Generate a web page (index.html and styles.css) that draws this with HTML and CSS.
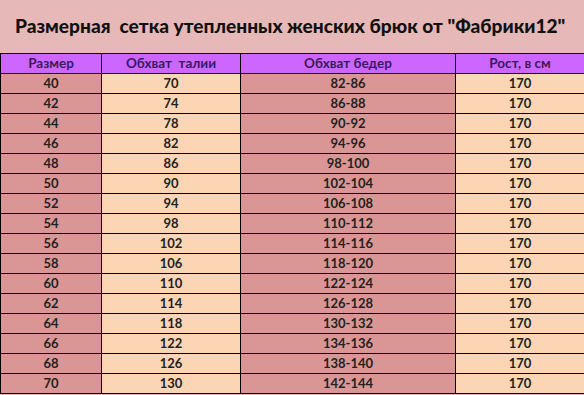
FILE: index.html
```html
<!DOCTYPE html>
<html lang="ru">
<head>
<meta charset="utf-8">
<link rel="stylesheet" href="styles.css">
</head>
<body>
<div class="sheet">
  <h1 class="title">Размерная&nbsp; сетка утепленных женских брюк от "Фабрики12"</h1>
  <table class="grid">
    <colgroup>
      <col class="c1"><col class="c2"><col class="c3"><col class="c4">
    </colgroup>
    <thead>
      <tr><th>Размер</th><th>Обхват&nbsp; талии</th><th>Обхват бедер</th><th>Рост, в см</th></tr>
    </thead>
    <tbody>
      <tr><td>40</td><td>70</td><td>82-86</td><td>170</td></tr>
      <tr><td>42</td><td>74</td><td>86-88</td><td>170</td></tr>
      <tr><td>44</td><td>78</td><td>90-92</td><td>170</td></tr>
      <tr><td>46</td><td>82</td><td>94-96</td><td>170</td></tr>
      <tr><td>48</td><td>86</td><td>98-100</td><td>170</td></tr>
      <tr><td>50</td><td>90</td><td>102-104</td><td>170</td></tr>
      <tr><td>52</td><td>94</td><td>106-108</td><td>170</td></tr>
      <tr><td>54</td><td>98</td><td>110-112</td><td>170</td></tr>
      <tr><td>56</td><td>102</td><td>114-116</td><td>170</td></tr>
      <tr><td>58</td><td>106</td><td>118-120</td><td>170</td></tr>
      <tr><td>60</td><td>110</td><td>122-124</td><td>170</td></tr>
      <tr><td>62</td><td>114</td><td>126-128</td><td>170</td></tr>
      <tr><td>64</td><td>118</td><td>130-132</td><td>170</td></tr>
      <tr><td>66</td><td>122</td><td>134-136</td><td>170</td></tr>
      <tr><td>68</td><td>126</td><td>138-140</td><td>170</td></tr>
      <tr><td>70</td><td>130</td><td>142-144</td><td>170</td></tr>
    </tbody>
  </table>
</div>
</body>
</html>
```
FILE: styles.css
```css
html, body {
  margin: 0;
  padding: 0;
  background: #e6b9b8;
}
.sheet {
  width: 584px;
  height: 395px;
  overflow: hidden;
  font-family: Lato, "Open Sans", "Liberation Sans", sans-serif;
  font-weight: 700;
}
.title {
  margin: 0;
  height: 53px;
  box-sizing: border-box;
  padding: 13px 0 0 15px;
  font-size: 19.1px;
  line-height: 26px;
  font-weight: 900;
  color: #111;
  white-space: nowrap;
}
.grid {
  border-collapse: collapse;
  table-layout: fixed;
  width: 584px;
}
.c1 { width: 101px; }
.c2 { width: 139px; }
.c3 { width: 215px; }
.c4 { width: 129px; }
.grid th, .grid td {
  border: 1px solid #000;
  height: 19px;
  padding: 0;
  text-align: center;
  font-size: 13px;
  line-height: 19px;
  font-weight: 700;
}
.grid th {
  background: #cc66ff;
  color: #3a1a5c;
  font-size: 13.5px;
}
.grid td {
  color: #222;
}
.grid td:nth-child(odd) { background: #da9694; }
.grid td:nth-child(even) { background: #fcd5b4; }
```
